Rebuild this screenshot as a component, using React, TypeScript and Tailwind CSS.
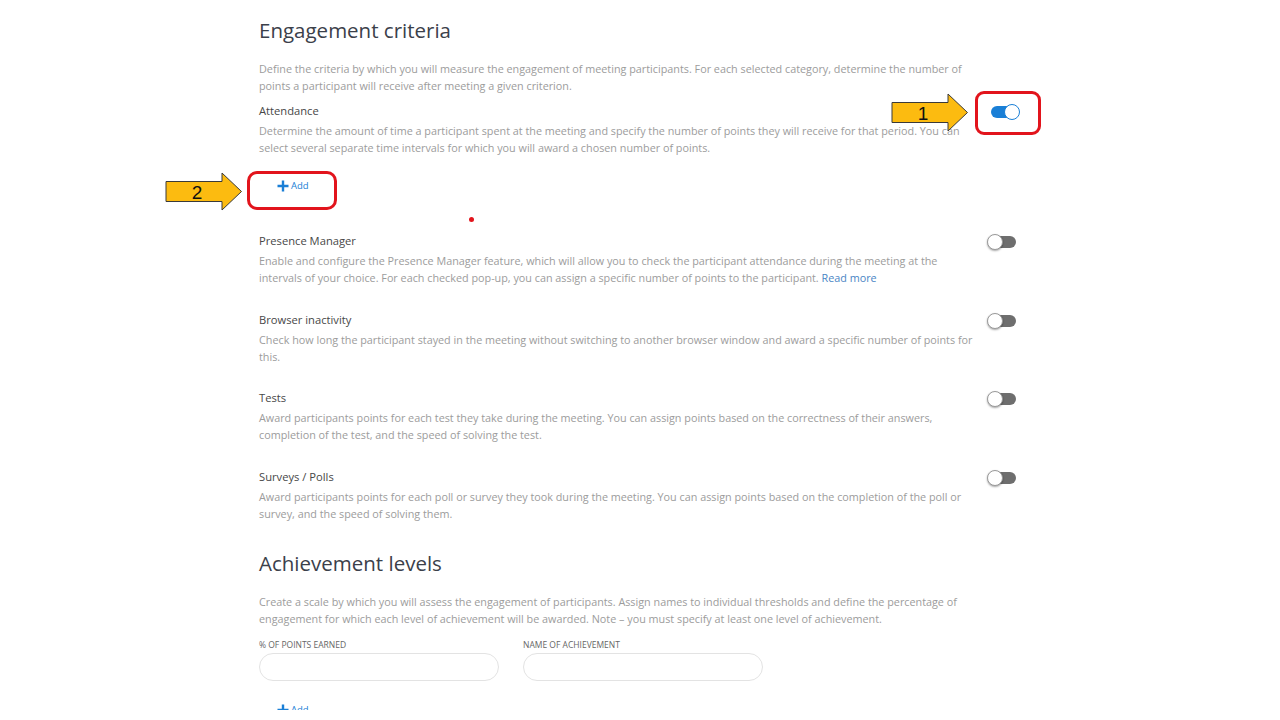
import React from "react";

const font = { fontFamily: '"Open Sans", "Noto Sans", Arial, sans-serif' };

function Toggle({ on }: { on?: boolean }) {
  if (on) {
    return (
      <div className="relative w-[29px] h-[16px]">
        <div className="absolute left-0 top-[2px] w-[27px] h-[12px] rounded-full bg-[#1a7fd6]" />
        <div className="absolute right-0 top-0 w-[16px] h-[16px] rounded-full bg-white border-[1.5px] border-[#1a7fd6]" />
      </div>
    );
  }
  return (
    <div className="relative w-[29px] h-[16px]">
      <div className="absolute right-0 top-[2px] w-[27px] h-[12px] rounded-full bg-[#6e6e6e]" />
      <div className="absolute left-0 top-0 w-[16px] h-[16px] rounded-full bg-white border border-[#9a9a9a] shadow-[0_1px_2px_rgba(0,0,0,0.35)]" />
    </div>
  );
}

function AddButton() {
  return (
    <button className="flex items-center h-[30px] pl-[18px] pr-3 text-[#1a7fd6]">
      <svg width="12" height="12" viewBox="0 0 12 12" className="mr-[2px]">
        <path d="M6 0.5V11.5M0.5 6H11.5" stroke="#1a7fd6" strokeWidth="2.4" />
      </svg>
      <span className="text-[9.5px] leading-[12px]">Add</span>
    </button>
  );
}

function Criterion({
  title,
  children,
}: {
  title: string;
  children: React.ReactNode;
}) {
  return (
    <div className="flex mb-[24.5px]">
      <div className="w-[714px]">
        <div className="text-[11.2px] leading-[17px] text-[#474747]">{title}</div>
        <p className="mt-[3px] text-[10.8px] leading-[17px] text-[#9c9c9c]">{children}</p>
      </div>
      <div className="ml-[14px] pt-[2px]">
        <Toggle />
      </div>
    </div>
  );
}

function Arrow({ label }: { label: string }) {
  return (
    <svg width="78" height="40" viewBox="0 0 78 40">
      <polygon
        points="1,9.5 57,9.5 57,1 76.5,19.5 57,38 57,29.5 1,29.5"
        fill="#fcbb10"
        stroke="#3a3a3a"
        strokeWidth="1"
      />
      <text
        x="32"
        y="27"
        textAnchor="middle"
        fontSize="19"
        fill="#111"
        fontFamily="Liberation Sans, Arial, sans-serif"
      >
        {label}
      </text>
    </svg>
  );
}

export default function App() {
  return (
    <div className="relative w-[1280px] h-[720px] overflow-hidden bg-white" style={font}>
      <div className="h-[710px] overflow-hidden pl-[259px] pt-[16px]">
        <h1 className="text-[20.5px] leading-[28px] text-[#3b404a]">Engagement criteria</h1>
        <p className="mt-[16px] w-[714px] text-[10.8px] leading-[17px] text-[#9c9c9c]">
          Define the criteria by which you will measure the engagement of meeting participants. For each selected
          category, determine the number of points a participant will receive after meeting a given criterion.
        </p>

        <div className="mt-[8px] flex">
          <div className="w-[714px]">
            <div className="text-[11.2px] leading-[17px] text-[#474747]">Attendance</div>
            <p className="mt-[3px] text-[10.8px] leading-[17px] text-[#9c9c9c]">
              Determine the amount of time a participant spent at the meeting and specify the number of points they
              will receive for that period. You can select several separate time intervals for which you will award
              a chosen number of points.
            </p>
          </div>
          <div className="ml-[18px] pt-[2px]">
            <Toggle on />
          </div>
        </div>

        <div className="mt-[15px] mb-[31px]">
          <AddButton />
        </div>

        <Criterion title="Presence Manager">
          Enable and configure the Presence Manager feature, which will allow you to check the participant attendance
          during the meeting at the intervals of your choice. For each checked pop-up, you can assign a specific
          number of points to the participant. <span className="text-[#4a86c5]">Read more</span>
        </Criterion>
        <Criterion title="Browser inactivity">
          Check how long the participant stayed in the meeting without switching to another browser window and award
          a specific number of points for this.
        </Criterion>
        <Criterion title="Tests">
          Award participants points for each test they take during the meeting. You can assign points based on the
          correctness of their answers, completion of the test, and the speed of solving the test.
        </Criterion>
        <Criterion title="Surveys / Polls">
          Award participants points for each poll or survey they took during the meeting. You can assign points based
          on the completion of the poll or survey, and the speed of solving them.
        </Criterion>

        <h2 className="pt-[3px] text-[20.5px] leading-[28px] text-[#3b404a]">Achievement levels</h2>
        <p className="mt-[16px] w-[714px] text-[10.8px] leading-[17px] text-[#9c9c9c]">
          Create a scale by which you will assess the engagement of participants. Assign names to individual
          thresholds and define the percentage of engagement for which each level of achievement will be awarded.
          Note – you must specify at least one level of achievement.
        </p>

        <div className="mt-[12px] flex gap-[24px]">
          <div>
            <div className="text-[8.5px] leading-[12px] text-[#666]">% OF POINTS EARNED</div>
            <div className="mt-[2px] w-[240px] h-[28px] rounded-full border border-[#e3e3e3]" />
          </div>
          <div>
            <div className="text-[8.5px] leading-[12px] text-[#666]">NAME OF ACHIEVEMENT</div>
            <div className="mt-[2px] w-[240px] h-[28px] rounded-full border border-[#e3e3e3]" />
          </div>
        </div>

        <div className="mt-[14px]">
          <AddButton />
        </div>
      </div>

      {/* annotations */}
      <div className="absolute left-[891px] top-[93px]">
        <Arrow label="1" />
      </div>
      <div className="absolute left-[975px] top-[91px] w-[66px] h-[44px] rounded-[9px] border-[3px] border-[#e2141c]" />
      <div className="absolute left-[165px] top-[172px]">
        <Arrow label="2" />
      </div>
      <div className="absolute left-[247px] top-[171px] w-[90px] h-[39px] rounded-[10px] border-[3px] border-[#e2141c]" />
      <div className="absolute left-[469px] top-[217px] w-[5px] h-[5px] rounded-full bg-[#e2141c]" />
    </div>
  );
}
